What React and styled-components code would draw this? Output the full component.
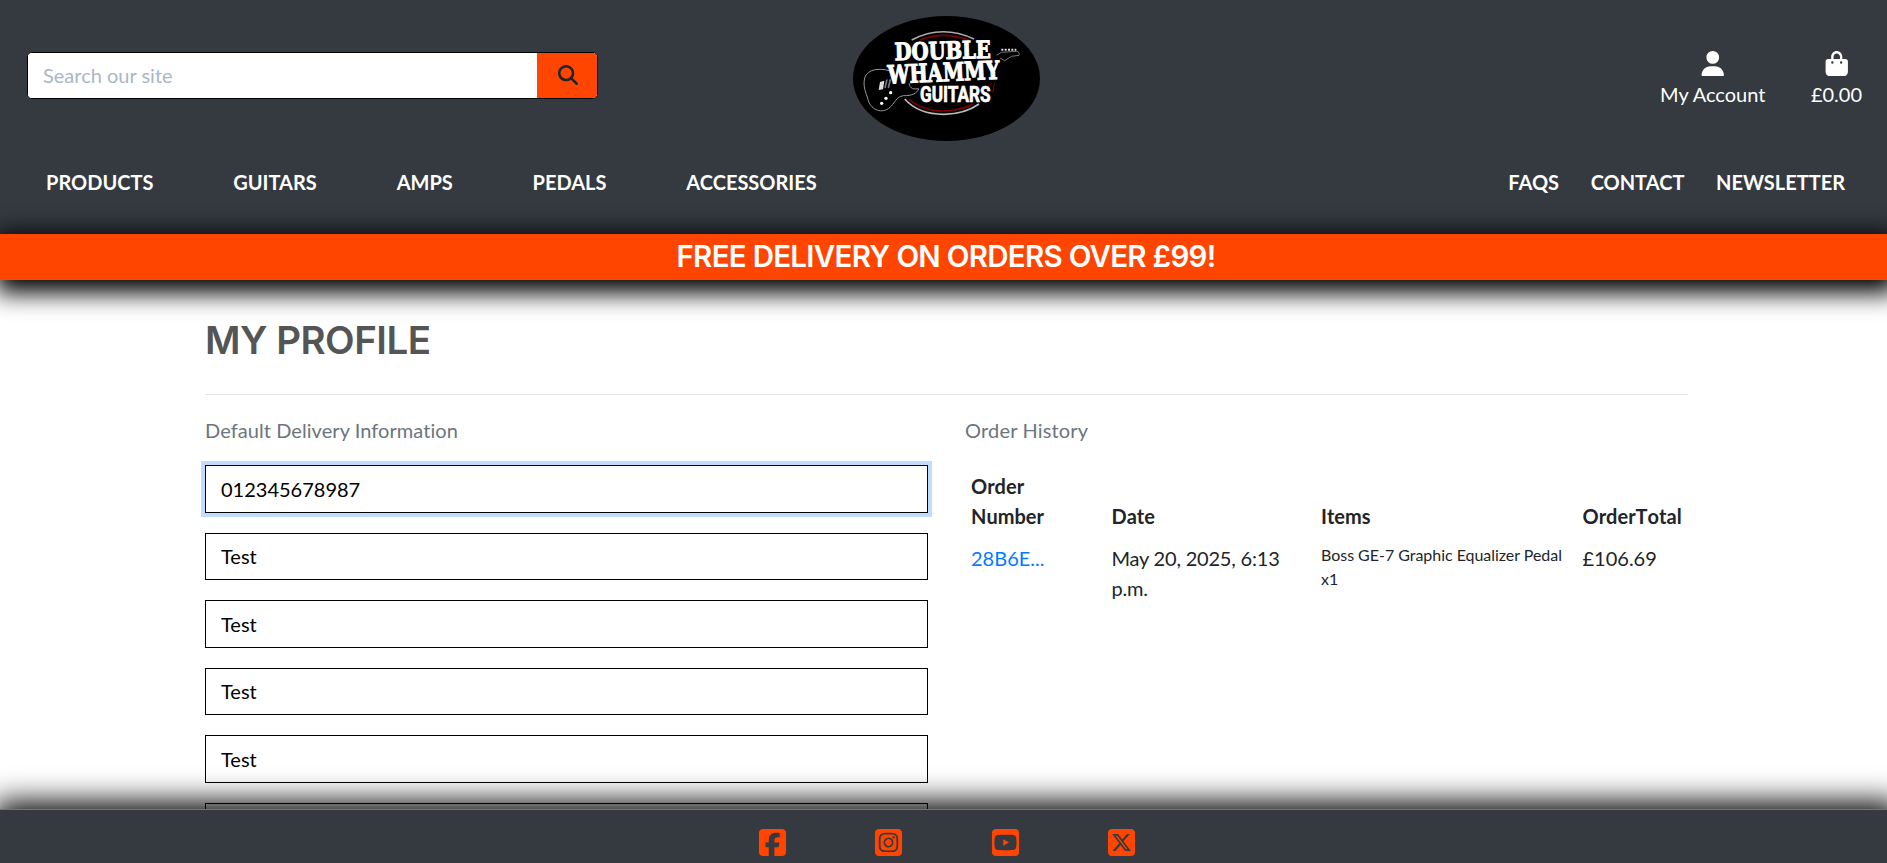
import React from "react";
import styled, { createGlobalStyle } from "styled-components";
import {
  FaMagnifyingGlass,
  FaUser,
  FaBagShopping,
  FaSquareFacebook,
  FaSquareInstagram,
  FaSquareYoutube,
  FaSquareXTwitter,
} from "react-icons/fa6";

const GlobalStyle = createGlobalStyle`
  *, *::before, *::after { box-sizing: border-box; }
  html, body { margin: 0; height: 863px; overflow: hidden; }
  body {
    font-family: Lato, "Open Sans", sans-serif;
    font-size: 20px;
    line-height: 30px;
    font-variant-ligatures: none;
    color: #212529;
    background: #fff;
  }
  svg { display: block; }
`;

const Page = styled.div`
  display: flex;
  flex-direction: column;
  height: 863px;
  overflow: hidden;
`;

const Header = styled.header`
  flex: none;
  height: 234px;
  background: #343a40;
  color: #fff;
`;

const TopRow = styled.div`
  display: grid;
  grid-template-columns: 1fr 187px 1fr;
  align-items: start;
  height: 157px;
  padding: 15.5px 25px 0 30px;
`;

const SearchForm = styled.form`
  display: flex;
  width: 571px;
  height: 47px;
  margin: 36.5px 0 0 -3px;
  border: 1px solid #000;
  border-radius: 5px;
  overflow: hidden;
  background: #fff;
`;

const SearchInput = styled.input`
  flex: 1;
  min-width: 0;
  border: 0;
  outline: 0;
  padding: 0 15px 2px;
  font: inherit;
  &::placeholder { color: #aab7c4; opacity: 1; }
`;

const SearchButton = styled.button`
  display: flex;
  align-items: center;
  justify-content: center;
  width: 60px;
  border: 0;
  padding: 0 0 1px 2px;
  background: #ff4500;
  color: #212529;
  font-size: 20px;
`;

const Account = styled.div`
  display: flex;
  justify-content: flex-end;
  gap: 45.5px;
  margin-top: 35px;
`;

const AccountLink = styled.a`
  display: flex;
  flex-direction: column;
  align-items: center;
  color: #fff;
  svg { font-size: 25.5px; margin-bottom: 3px; }
`;

const NavRow = styled.nav`
  display: flex;
  justify-content: space-between;
  padding: 10px 42px 0 46px;
  font-weight: 700;
`;

const NavGroup = styled.div`
  display: flex;
  gap: ${(p) => p.$gap}px;
`;

const Banner = styled.div`
  position: relative;
  flex: none;
  display: flex;
  align-items: center;
  justify-content: center;
  height: 46px;
  padding: 0 0 2px 5px;
  background: #ff4500;
  color: #fff;
  box-shadow: 3px 6px 25px 7px #000;
  font: 600 29.5px/44px Inter, sans-serif;
  letter-spacing: -0.72px;
`;

const Main = styled.main`
  flex: 1;
  min-height: 0;
  width: 1483px;
  margin-left: 205px;
  padding-top: 36px;
`;

const Title = styled.h1`
  margin: 0;
  height: 78px;
  font: 600 38.5px/48px Inter, sans-serif;
  letter-spacing: -0.5px;
  color: #555;
`;

const Columns = styled.div`
  display: grid;
  grid-template-columns: 723px 723px;
  gap: 37px;
  padding-top: 20px;
  border-top: 1px solid #e5e5e5;
`;

const SectionLabel = styled.p`
  margin: 0 0 20px;
  letter-spacing: ${(p) => p.$track || 0}px;
  color: #6c757d;
`;

const Fields = styled.div`
  display: flex;
  flex-direction: column;
  gap: 20px;
`;

const Field = styled.input`
  width: 100%;
  height: 47.5px;
  padding: 0 15px;
  border: 1px solid #000;
  border-radius: 0;
  outline: 0;
  color: #000;
  font: inherit;
  box-shadow: ${(p) => (p.$active ? "0 0 0 4px rgba(0, 123, 255, 0.25)" : "none")};
`;

const OrderTable = styled.table`
  width: 100%;
  table-layout: fixed;
  border-collapse: collapse;
`;

const Cell = styled.td`
  width: ${(p) => p.$w}px;
  padding: 6px;
  text-align: left;
  vertical-align: top;
  letter-spacing: ${(p) => p.$track || 0}px;
  white-space: ${(p) => (p.$nowrap ? "nowrap" : "normal")};
`;

const HeadCell = styled(Cell).attrs({ as: "th" })`
  vertical-align: bottom;
  font-kerning: none;
`;

const OrderLink = styled.a`
  color: #007bff;
`;

const ItemText = styled.div`
  font-size: 16px;
  line-height: 24px;
  letter-spacing: -0.03px;
`;

const Footer = styled.footer`
  position: relative;
  flex: none;
  display: flex;
  justify-content: center;
  gap: 85.3px;
  height: 54px;
  padding: 17px 0 0 7px;
  border-top: 1px solid #ff4500;
  background: #343a40;
  color: #ff4500;
  font-size: 31px;
  box-shadow: 4px 2px 30px 9px #000;
`;

const LogoText = styled.text`
  fill: #fff;
  stroke: #fff;
  stroke-width: ${(p) => p.$stroke}px;
  font-family: ${(p) => p.$family};
  font-weight: 700;
  font-size: ${(p) => p.$size}px;
`;

const SLAB = '"DejaVu Serif Condensed", "DejaVu Serif", serif';

function Logo() {
  return (
    <svg width="187" height="125" viewBox="39 32 561 375">
      <ellipse cx="319.5" cy="219.5" rx="280.5" ry="187.5" fill="#000" />
      <g fill="none" strokeLinecap="butt">
        <path d="M215 104 Q305 56 402 101" stroke="#aaa" strokeWidth="5" />
        <path d="M240 104 Q310 76 385 104" stroke="#800000" strokeWidth="5" />
        <path d="M194 281 Q235 327 312 327 Q375 326 417 296" stroke="#bbb" strokeWidth="5" />
        <path d="M207 281 Q245 317 312 317 Q365 315 397 297" stroke="#800000" strokeWidth="5" />
        <path
          d="M147 196 C120 188 82 190 74 218 C68 244 78 262 84 282 C90 310 120 326 145 310 C168 292 165 276 190 271 C215 272 232 264 236 250 C222 252 210 252 207 234"
          stroke="#999"
          strokeWidth="3"
        />
        <path d="M458 262 L464 232 M450 240 L456 233" stroke="#800000" strokeWidth="3" />
        <path d="M470 150 L484 141 L530 138 Q540 140 537 150 L514 153 L494 166 L480 158" stroke="#777" strokeWidth="3" />
        <path d="M484 133 H529" stroke="#ddd" strokeWidth="6" strokeDasharray="6 4" />
        <path d="M135 248 L141 222 M145 248 L151 222" stroke="#777" strokeWidth="5" />
      </g>
      <path d="M120 230 L133 226 L129 252 L116 254 Z" fill="#ddd" />
      <g fill="#fff">
        <circle cx="152" cy="262" r="5" />
        <circle cx="138" cy="279" r="5" />
        <circle cx="125" cy="294" r="5" />
      </g>
      <LogoText $family={SLAB} $size={72} $stroke={3} x="164" y="165" textLength="289" lengthAdjust="spacingAndGlyphs" transform="rotate(-1.5 164 165)">
        DOUBLE
      </LogoText>
      <LogoText $family={SLAB} $size={76} $stroke={3} x="144" y="235" textLength="336" lengthAdjust="spacingAndGlyphs" transform="rotate(-2.5 144 235)">
        WHAMMY
      </LogoText>
      <LogoText $family="Roboto, sans-serif" $size={64} $stroke={2} x="240" y="290" textLength="212" lengthAdjust="spacingAndGlyphs">
        GUITARS
      </LogoText>
    </svg>
  );
}

const shopLinks = ["PRODUCTS", "GUITARS", "AMPS", "PEDALS", "ACCESSORIES"];
const infoLinks = ["FAQS", "CONTACT", "NEWSLETTER"];
const fields = ["012345678987", "Test", "Test", "Test", "Test", ""];

export default function App() {
  return (
    <Page>
      <GlobalStyle />
      <Header>
        <TopRow>
          <SearchForm>
            <SearchInput placeholder="Search our site" />
            <SearchButton type="button" aria-label="Search">
              <FaMagnifyingGlass />
            </SearchButton>
          </SearchForm>
          <Logo />
          <Account>
            <AccountLink>
              <FaUser />
              My Account
            </AccountLink>
            <AccountLink>
              <FaBagShopping />
              £0.00
            </AccountLink>
          </Account>
        </TopRow>
        <NavRow>
          <NavGroup $gap={79.8}>
            {shopLinks.map((t) => <span key={t}>{t}</span>)}
          </NavGroup>
          <NavGroup $gap={31.6}>
            {infoLinks.map((t) => <span key={t}>{t}</span>)}
          </NavGroup>
        </NavRow>
      </Header>
      <Banner>FREE DELIVERY ON ORDERS OVER £99!</Banner>
      <Main>
        <Title>MY PROFILE</Title>
        <Columns>
          <section>
            <SectionLabel $track={0.07}>Default Delivery Information</SectionLabel>
            <Fields>
              {fields.map((v, i) => <Field key={i} defaultValue={v} $active={i === 0} />)}
            </Fields>
          </section>
          <section>
            <SectionLabel $track={0.17}>Order History</SectionLabel>
            <OrderTable>
              <thead>
                <tr>
                  <HeadCell $w={140.5}>Order Number</HeadCell>
                  <HeadCell $w={209.5}>Date</HeadCell>
                  <HeadCell $w={261.5}>Items</HeadCell>
                  <HeadCell $w={111.5}>OrderTotal</HeadCell>
                </tr>
              </thead>
              <tbody>
                <tr>
                  <Cell><OrderLink>28B6E...</OrderLink></Cell>
                  <Cell $track={-0.2}>May 20, 2025, 6:13 p.m.</Cell>
                  <Cell $nowrap>
                    <ItemText>Boss GE-7 Graphic Equalizer Pedal<br />x1</ItemText>
                  </Cell>
                  <Cell>£106.69</Cell>
                </tr>
              </tbody>
            </OrderTable>
          </section>
        </Columns>
      </Main>
      <Footer>
        <FaSquareFacebook />
        <FaSquareInstagram />
        <FaSquareYoutube />
        <FaSquareXTwitter />
      </Footer>
    </Page>
  );
}
